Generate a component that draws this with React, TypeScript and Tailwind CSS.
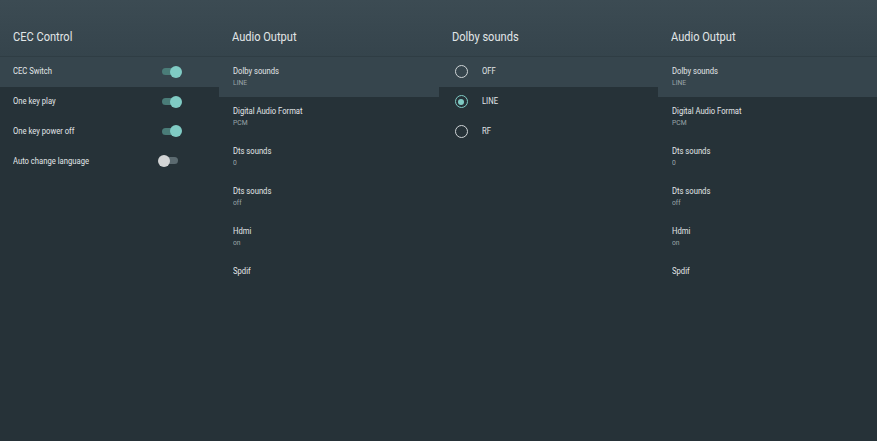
import React from 'react';

type Item = { title: string; sub?: string };

const audio: Item[] = [
  { title: 'Dolby sounds', sub: 'LINE' },
  { title: 'Digital Audio Format', sub: 'PCM' },
  { title: 'Dts sounds', sub: '0' },
  { title: 'Dts sounds', sub: 'off' },
  { title: 'Hdmi', sub: 'on' },
  { title: 'Spdif' },
];

const cec = [
  { label: 'CEC Switch', on: true },
  { label: 'One key play', on: true },
  { label: 'One key power off', on: true },
  { label: 'Auto change language', on: false },
];

const dolby = [
  { label: 'OFF', checked: false },
  { label: 'LINE', checked: true },
  { label: 'RF', checked: false },
];

// the original uses a condensed face; squeeze Roboto to the same widths
const label = 'inline-block text-[8.5px] text-[#e2e6e8] scale-x-[0.9] origin-left whitespace-nowrap';

function Header({ title }: { title: string }) {
  return (
    <div className="h-[57px] flex items-end pb-[13px] px-[13px] bg-gradient-to-b from-[#3c4b53] to-[#35444c] border-b border-[#2f3d44]">
      <span className="text-[13.5px] text-[#e2e6e8] leading-none scale-x-[0.82] origin-left whitespace-nowrap">{title}</span>
    </div>
  );
}

function Toggle({ on }: { on: boolean }) {
  return (
    <div className="relative w-[24px] h-[12px] flex items-center">
      <div className={`ml-[4px] w-[16px] h-[7px] rounded-full ${on ? 'bg-[#4a7c78]' : 'bg-[#5b6a70]'}`} />
      <div
        className={`absolute top-0 w-[12px] h-[12px] rounded-full ${on ? 'right-0 bg-[#80cbc4]' : 'left-0 bg-[#d2d4d5]'}`}
      />
    </div>
  );
}

function Radio({ checked }: { checked: boolean }) {
  return (
    <div
      className={`w-[13px] h-[13px] rounded-full border-[1.5px] flex items-center justify-center ${
        checked ? 'border-[#80cbc4]' : 'border-[#cfd4d6]'
      }`}
    >
      {checked && <div className="w-[6px] h-[6px] rounded-full bg-[#80cbc4]" />}
    </div>
  );
}

function AudioColumn() {
  return (
    <div className="flex-1 flex flex-col">
      <Header title="Audio Output" />
      {audio.map((it, i) => (
        <div key={i} className={`h-[40px] px-[14px] pt-[9px] flex flex-col ${i === 0 ? 'bg-[#36454d]' : ''}`}>
          <span className={`${label} leading-[10px]`}>{it.title}</span>
          {it.sub && (
            <span className="inline-block text-[7.5px] leading-[8px] mt-[3px] text-[#9aa4a8] scale-x-[0.9] origin-left">
              {it.sub}
            </span>
          )}
        </div>
      ))}
    </div>
  );
}

export default function App() {
  return (
    <div className="w-[877px] h-[441px] bg-[#263238] flex overflow-hidden" style={{ fontFamily: 'Roboto, "Liberation Sans", sans-serif' }}>
      <div className="flex-1 flex flex-col">
        <Header title="CEC Control" />
        {cec.map((it, i) => (
          <div
            key={it.label}
            className={`h-[29.7px] pl-[13px] pr-[37px] flex items-center justify-between ${i === 0 ? 'bg-[#36454d]' : ''}`}
          >
            <span className={label}>{it.label}</span>
            <Toggle on={it.on} />
          </div>
        ))}
      </div>
      <AudioColumn />
      <div className="flex-1 flex flex-col">
        <Header title="Dolby sounds" />
        {dolby.map((it, i) => (
          <div
            key={it.label}
            className={`h-[29.7px] pl-[16px] flex items-center gap-[14px] ${i === 0 ? 'bg-[#36454d]' : ''}`}
          >
            <Radio checked={it.checked} />
            <span className={label}>{it.label}</span>
          </div>
        ))}
      </div>
      <AudioColumn />
    </div>
  );
}
